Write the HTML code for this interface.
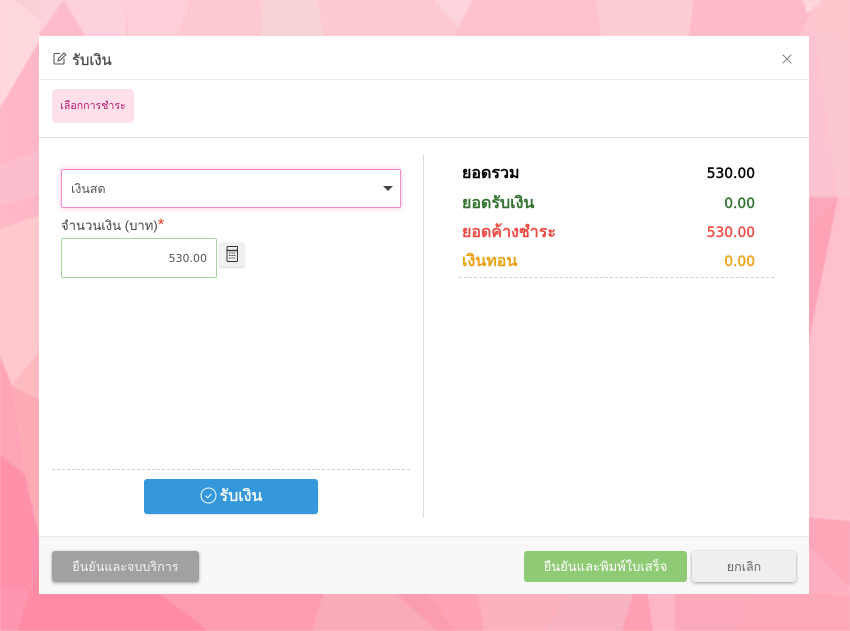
<!DOCTYPE html>
<html lang="th">
<head>
<meta charset="utf-8">
<style>
html,body{margin:0;padding:0;width:850px;height:631px;overflow:hidden;background:#ffc4cf;font-family:"DejaVu Sans","Liberation Sans","Noto Sans CJK SC",sans-serif;}
#bg{position:absolute;left:0;top:0;width:850px;height:631px;filter:blur(.8px)}
.modal{position:absolute;left:39px;top:36px;width:770px;height:558px;background:#fff;overflow:hidden;filter:blur(.25px)}
.abs{position:absolute;white-space:nowrap;font-family:"Liberation Sans","Noto Sans CJK SC",sans-serif}
.line{position:absolute;left:0;width:770px;height:1px}
.num{font-family:"DejaVu Sans",sans-serif;text-align:right;font-size:13.8px;font-weight:400;-webkit-text-stroke:.4px currentColor}
.lab{font-size:16px;font-weight:700}
.btn{position:absolute;border-radius:3px;text-align:center;white-space:nowrap;font-family:"Liberation Sans","Noto Sans CJK SC",sans-serif;}
</style>
</head>
<body>
<svg id="bg" viewBox="0 0 850 631" xmlns="http://www.w3.org/2000/svg">
<rect width="850" height="631" fill="#fec5cf"/>
<!-- top band -->
<polygon points="40,0 126,0 126,60 40,60" fill="#fdd2dc"/>
<polygon points="64,0 40,33 40,60 100,60" fill="#fdbccb"/>
<polygon points="64,0 126,0 126,60 100,60" fill="#fdd2dc"/>
<polygon points="126,0 190,0 168,60 130,60" fill="#fdd0da"/>
<polygon points="190,0 263,0 260,60 168,60" fill="#fdcad3"/>
<polygon points="263,0 318,0 327,60 260,60" fill="#f8d3d5"/>
<polygon points="318,0 434,0 458,18 450,60 327,60" fill="#fdc9d2"/>
<polygon points="434,0 473,0 458,28" fill="#fdd4dc"/>
<polygon points="473,0 596,0 605,60 450,60 458,28" fill="#fdc2cd"/>
<polygon points="596,0 694,0 685,60 605,60" fill="#fccdd5"/>
<polygon points="694,0 802,0 810,12 790,60 685,60" fill="#febac6"/>
<polygon points="802,0 850,0 850,0 810,12" fill="#ffd3da"/>
<!-- left band -->
<polygon points="0,0 40,0 40,40 0,108" fill="#ffd8dd"/>
<polygon points="15,0 40,0 40,20" fill="#f9d0d4"/>
<polygon points="40,40 0,108 0,229 40,215" fill="#ffb7c6"/>
<polygon points="0,165 40,150 40,195 0,205" fill="#fbbdcb"/>
<polygon points="0,229 40,215 40,350 12,386 0,356" fill="#fec8cd"/>
<polygon points="12,386 40,350 40,400" fill="#fcb9bf"/>
<polygon points="0,356 12,386 25,475 0,455" fill="#fda4b6"/>
<polygon points="12,386 40,400 40,541 25,475" fill="#fdabb4"/>
<polygon points="0,455 25,475 40,541 40,631 0,631" fill="#ff90aa"/>
<polygon points="40,560 40,631 25,631" fill="#ff8aa3"/>
<!-- bottom band -->
<polygon points="0,590 30,590 18,631 0,631" fill="#fd96b0"/>
<polygon points="30,590 155,590 195,620 208,631 18,631" fill="#ff8ba5"/>
<polygon points="155,590 325,590 312,631 208,631 195,620" fill="#fd9bb0"/>
<polygon points="325,590 392,590 437,631 312,631" fill="#f9abb8"/>
<polygon points="392,590 425,590 455,631 437,631" fill="#fb9cb0"/>
<polygon points="425,590 477,590 484,631 455,631" fill="#fea3b5"/>
<polygon points="477,590 634,590 622,631 484,631" fill="#fdb0bd"/>
<polygon points="570,590 634,590 622,631 545,631" fill="#f8b3c0"/>
<polygon points="634,590 647,590 653,631 622,631" fill="#fe9fb3"/>
<polygon points="647,590 675,590 675,631 653,631" fill="#fdb6c6"/>
<polygon points="675,590 750,590 738,631 675,631" fill="#fba9ba"/>
<polygon points="750,590 850,590 850,631 738,631" fill="#fda8b8"/>
<!-- right band -->
<polygon points="805,0 850,0 850,40 815,30" fill="#fdc7cd"/>
<polygon points="805,0 822,0 806,14" fill="#ffd8de"/>
<polygon points="806,30 815,30 838,197 806,197" fill="#fdc3d0"/>
<polygon points="815,30 850,40 850,300 838,197" fill="#fcc8d0"/>
<polygon points="806,197 838,197 806,230" fill="#fcaabb"/>
<polygon points="838,197 806,230 806,355" fill="#fea2b5"/>
<polygon points="838,197 850,197 850,517 806,517 806,355" fill="#fec0cc"/>
<polygon points="806,517 850,521 850,588 806,543" fill="#fca6b8"/>
<polygon points="806,543 850,588 850,595 806,595" fill="#feb0c0"/>
<polygon points="806,593 850,596 850,631 806,631" fill="#fca8b8"/>
</svg>

<div class="modal">
  <!-- header -->
  <svg class="abs" style="left:14px;top:15px" width="14" height="15" viewBox="0 0 14 15" fill="none" stroke="#555" stroke-width="1.1">
    <path d="M7 2.5H2.2Q1 2.5 1 3.7V12Q1 13 2.2 13H10Q11 13 11 12V7.5"/>
    <path d="M5 9.8L5.4 7.6L11 2L12.8 3.7L7.2 9.4Z"/>
  </svg>
  <div class="abs" style="left:33px;top:16px;font-size:14.8px;line-height:18px;color:#444;-webkit-text-stroke:.25px #444">รับเงิน</div>
  <svg class="abs" style="left:743px;top:18px" width="10" height="10" viewBox="0 0 10 10" stroke="#777" stroke-width="1" fill="none"><path d="M.7.7L9.3 9.3M9.3.7L.7 9.3"/></svg>
  <div class="line" style="top:43px;background:#eaeaea"></div>

  <!-- tab -->
  <div class="abs" style="left:13px;top:53px;width:82px;height:34px;background:#fde0ea;border-radius:4px;text-align:center;line-height:35px;font-size:10.6px;color:#b0156e">เลือกการชำระ</div>
  <div class="line" style="top:101px;background:#d9d9d9"></div>

  <!-- left column -->
  <div class="abs" style="left:22px;top:133px;width:338px;height:37px;border:1px solid #f28ac2;border-radius:2px;box-shadow:0 0 6px #fbc3e2;background:#fff"></div>
  <div class="abs" style="left:32px;top:144px;font-size:12.5px;line-height:18px;color:#555">เงินสด</div>
  <div class="abs" style="left:344px;top:150px;width:0;height:0;border-left:5px solid transparent;border-right:5px solid transparent;border-top:5px solid #444"></div>

  <div class="abs" style="left:22px;top:180px;font-size:13.1px;line-height:20px;color:#444">จำนวนเงิน (บาท)<span style="color:#f44336;font-size:17px;line-height:14px">*</span></div>
  <div class="abs" style="left:22px;top:202px;width:154px;height:38px;border:1px solid #a5d6a0;border-radius:2px;background:#fff"></div>
  <div class="abs" style="left:60px;top:215px;width:108px;text-align:right;font-family:'DejaVu Sans',sans-serif;font-size:11px;line-height:16px;color:#555">530.00</div>
  <div class="abs" style="left:180px;top:206px;width:26px;height:25px;background:#f1f1f1;border-radius:2px;box-shadow:0 1px 1px #ddd"></div>
  <svg class="abs" style="left:187px;top:209px" width="13" height="18" viewBox="0 0 13 18" fill="none" stroke="#333" stroke-width="1">
    <path d="M2 1.5H11.5V15.5Q11.5 16.5 10.5 16.5H2Q1 16.5 1 15.5V2.5Q1 1.5 2 1.5Z"/>
    <path d="M1 5.5H11.5" stroke-width="1.4"/>
    <path d="M3 8H10M3 10.5H10M3 13H10" stroke-dasharray="1.4 1"/>
  </svg>

  <div class="abs" style="left:13px;top:433px;width:358px;border-top:1px dashed #d2d2d2"></div>
  <div class="btn" style="left:105px;top:443px;width:174px;height:35px;background:#3498db;box-shadow:0 1px 1px rgba(0,0,0,.1);color:#fff;font-size:16px;line-height:36px;-webkit-text-stroke:.35px #fff;padding:0">
    <svg width="17" height="17" viewBox="0 0 17 17" fill="none" stroke="#fff" stroke-width="1" style="vertical-align:-3px;margin-right:3px"><circle cx="8.5" cy="8.5" r="7.5"/><path d="M5.5 8.8L7.6 10.8L11.5 6.8"/></svg>รับเงิน
  </div>

  <div class="abs" style="left:384px;top:119px;width:1px;height:363px;background:#dcdcdc"></div>

  <!-- right column -->
  <div class="abs lab" style="left:423px;top:128px;line-height:20px;color:#000">ยอดรวม</div>
  <div class="abs num" style="left:616px;width:100px;top:128px;line-height:20px;color:#000">530.00</div>
  <div class="abs lab" style="left:423px;top:158px;line-height:20px;color:#33722f">ยอดรับเงิน</div>
  <div class="abs num" style="left:616px;width:100px;top:158px;line-height:20px;color:#33722f">0.00</div>
  <div class="abs lab" style="left:423px;top:187px;line-height:20px;color:#ee4d46">ยอดค้างชำระ</div>
  <div class="abs num" style="left:616px;width:100px;top:187px;line-height:20px;color:#ee4d46">530.00</div>
  <div class="abs lab" style="left:423px;top:216px;line-height:20px;color:#eba212">เงินทอน</div>
  <div class="abs num" style="left:616px;width:100px;top:216px;line-height:20px;color:#eba212">0.00</div>
  <div class="abs" style="left:420px;top:241px;width:315px;border-top:1px dashed #d2d2d2"></div>

  <!-- footer -->
  <div class="abs" style="left:0;top:500px;width:770px;height:58px;background:#f8f8f8;border-top:1px solid #e8e8e8;box-sizing:border-box"></div>
  <div class="btn" style="left:13px;top:515px;width:147px;height:31px;background:#a1a1a1;box-shadow:0 1px 3px rgba(0,0,0,.35);color:#f4f4f4;font-size:12.6px;line-height:32px">ยืนยันและจบบริการ</div>
  <div class="btn" style="left:485px;top:515px;width:163px;height:31px;background:#8fcb74;color:#fff;font-size:13px;line-height:32px">ยืนยันและพิมพ์ใบเสร็จ</div>
  <div class="btn" style="left:653px;top:515px;width:104px;height:31px;background:#efefef;box-shadow:0 1px 3px rgba(0,0,0,.35);color:#666;font-size:12.5px;line-height:32px">ยกเลิก</div>
</div>
</body>
</html>
